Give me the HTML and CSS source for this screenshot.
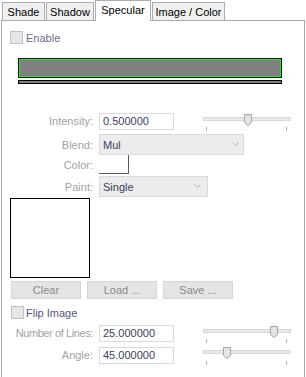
FILE: index.html
```html
<!DOCTYPE html>
<html>
<head>
<meta charset="utf-8">
<link rel="stylesheet" href="styles.css">
</head>
<body>
<div class="tabs">
  <div class="tab t-shade">Shade</div>
  <div class="tab t-shadow">Shadow</div>
  <div class="tab t-spec active">Specular</div>
  <div class="tab t-image">Image / Color</div>
</div>
<div class="panel">
  <div class="check enable"><span class="box"></span><span class="ctext">Enable</span></div>
  <div class="colorbar"></div>
  <div class="thinbar"></div>

  <div class="row r-intensity">
    <span class="lbl">Intensity:</span>
    <div class="field">0.500000</div>
    <div class="slider">
      <div class="track"></div>
      <svg class="thumb" style="left:41px" width="8" height="12" viewBox="0 0 8 12"><polygon points="0.5,0.5 7.5,0.5 7.5,8.5 4,11.5 0.5,8.5" fill="#e4e4e4" stroke="#a6a6a6"/></svg>
      <div class="ticks"><i></i><i></i></div>
    </div>
  </div>

  <div class="row r-blend">
    <span class="lbl">Blend:</span>
    <div class="combo c-blend"><span>Mul</span><svg class="chev" width="7" height="5" viewBox="0 0 7 5"><polyline points="0.5,0.5 3.5,3.5 6.5,0.5" fill="none" stroke="#b4b4b4"/></svg></div>
  </div>

  <div class="row r-color">
    <span class="lbl">Color:</span>
    <div class="swatch"></div>
  </div>

  <div class="row r-paint">
    <span class="lbl">Paint:</span>
    <div class="combo c-paint"><span>Single</span><svg class="chev" width="7" height="5" viewBox="0 0 7 5"><polyline points="0.5,0.5 3.5,3.5 6.5,0.5" fill="none" stroke="#b4b4b4"/></svg></div>
  </div>

  <div class="imagebox"></div>

  <div class="buttons">
    <div class="btn">Clear</div>
    <div class="btn">Load ...</div>
    <div class="btn">Save ...</div>
  </div>

  <div class="check flip"><span class="box"></span><span class="ctext">Flip Image</span></div>

  <div class="row r-lines">
    <span class="lbl">Number of Lines:</span>
    <div class="field">25.000000</div>
    <div class="slider">
      <div class="track"></div>
      <svg class="thumb" style="left:67px" width="8" height="12" viewBox="0 0 8 12"><polygon points="0.5,0.5 7.5,0.5 7.5,8.5 4,11.5 0.5,8.5" fill="#e4e4e4" stroke="#a6a6a6"/></svg>
      <div class="ticks"><i></i><i></i></div>
    </div>
  </div>

  <div class="row r-angle">
    <span class="lbl">Angle:</span>
    <div class="field">45.000000</div>
    <div class="slider s-angle">
      <div class="track"></div>
      <svg class="thumb" style="left:20px" width="8" height="12" viewBox="0 0 8 12"><polygon points="0.5,0.5 7.5,0.5 7.5,8.5 4,11.5 0.5,8.5" fill="#e4e4e4" stroke="#a6a6a6"/></svg>
      <div class="ticks"><i></i><i></i></div>
    </div>
  </div>
</div>
</body>
</html>
```

FILE: styles.css
```css
* { box-sizing: border-box; }
html, body { margin: 0; padding: 0; background: #fff; }
body {
  width: 306px;
  height: 377px;
  overflow: hidden;
  font-family: "Liberation Sans", Arial, sans-serif;
  font-size: 11px;
  color: #000;
}

.tabs {
  display: flex;
  align-items: flex-end;
  height: 21px;
  padding-left: 2px;
  position: relative;
  z-index: 2;
}
.tab {
  height: 18px;
  margin-bottom: 1px;
  margin-right: 1px;
  border: 1px solid #acacac;
  border-bottom: none;
  background: #f0f0f0;
  display: flex;
  align-items: center;
  justify-content: center;
  padding-top: 1px;
}
.t-shade { width: 43px; }
.t-shadow { width: 48px; }
.t-spec { width: 56px; }
.t-image { width: 73px; }
.tab.active {
  height: 21px;
  margin-bottom: 0;
  background: #fff;
  padding-top: 0;
  padding-bottom: 3px;
}

.panel {
  margin-top: -1px;
  margin-left: 1px;
  width: 304px;
  height: 357px;
  border: 1px solid #a8a8a8;
  border-bottom: none;
  position: relative;
  z-index: 1;
}

.check {
  display: flex;
  align-items: center;
  height: 13px;
}
.check .box {
  width: 13px;
  height: 13px;
  border: 1px solid #c2c2c2;
  background: #e6e6e6;
}
.enable { margin-top: 10px; margin-left: 8px; }
.enable .ctext { margin-left: 3px; color: #6c6c8e; }
.flip { margin-top: 7px; margin-left: 9px; }
.flip .ctext { margin-left: 2px; color: #555578; }

.colorbar {
  margin-top: 14px;
  margin-left: 16px;
  width: 264px;
  height: 20px;
  border: 1px solid #000;
  box-shadow: inset 0 0 0 1px #00ff00;
  background: #808080;
}
.thinbar {
  margin-top: 2px;
  margin-left: 16px;
  width: 264px;
  height: 4px;
  border: 1px solid #000;
  background: #808080;
}

.row {
  display: flex;
  align-items: center;
}
.lbl {
  width: 91px;
  text-align: right;
  color: #a2a2a2;
  margin-right: 6px;
  white-space: nowrap;
}
.r-lines .lbl { letter-spacing: -0.4px; }
.field {
  width: 75px;
  height: 17px;
  border: 1px solid #dadada;
  background: #fff;
  color: #3c3c5e;
  padding-left: 3px;
  line-height: 15px;
}
.r-intensity { margin-top: 29px; height: 17px; align-items: flex-start; }
.r-intensity .lbl, .r-lines .lbl, .r-angle .lbl { line-height: 17px; }
.r-blend { margin-top: 4px; height: 21px; }
.r-color { height: 19px; }
.r-paint { margin-top: 2px; height: 21px; }
.r-lines { margin-top: 6px; height: 17px; align-items: flex-start; }
.r-angle { margin-top: 5px; height: 17px; align-items: flex-start; }

.combo {
  height: 21px;
  border: 1px solid #dadada;
  background: #ececec;
  color: #3c3c5e;
  display: flex;
  align-items: center;
  justify-content: space-between;
  padding-left: 3px;
}
.c-blend { width: 145px; padding-right: 4px; }
.c-paint { width: 109px; padding-right: 6px; }
.chev { display: block; }

.swatch {
  width: 30px;
  height: 19px;
  border-right: 1px solid #5a5a5a;
  border-bottom: 1px solid #5a5a5a;
  background: #fff;
}

.slider {
  position: relative;
  margin-left: 29px;
  width: 88px;
  height: 18px;
}
.track {
  margin-top: 4px;
  height: 4px;
  border: 1px solid #d8d8d8;
  background: #e8e8e8;
}
.s-angle .track { margin-top: 3px; }
.thumb {
  position: absolute;
  top: 1px;
}
.s-angle .thumb { top: 0; }
.ticks {
  display: flex;
  justify-content: space-between;
  margin-top: 6px;
  padding: 0 4px 0 3px;
}
.s-angle .ticks { margin-top: 7px; }
.ticks i {
  display: block;
  width: 1px;
  height: 4px;
  background: #b4b4b4;
}

.imagebox {
  margin-top: 1px;
  margin-left: 8px;
  width: 80px;
  height: 80px;
  border: 1px solid #000;
  background: #fff;
}

.buttons {
  display: flex;
  gap: 6px;
  margin-top: 3px;
  margin-left: 9px;
}
.btn {
  width: 70px;
  height: 18px;
  border: 1px solid #d6d6d6;
  background: #e5e5e5;
  color: #8a8a8a;
  display: flex;
  align-items: center;
  justify-content: center;
}
```
